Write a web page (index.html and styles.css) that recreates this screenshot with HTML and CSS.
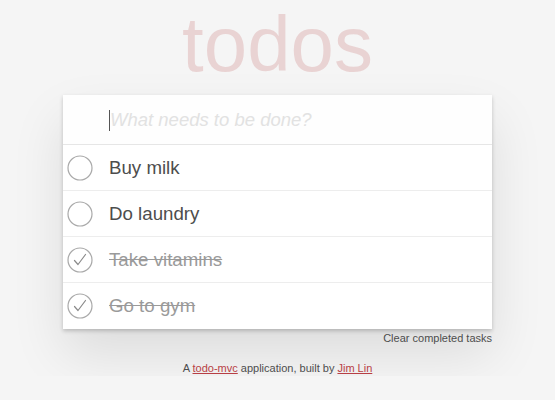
FILE: index.html
```html
<!DOCTYPE html>
<html>
<head>
<meta charset="utf-8">
<link rel="stylesheet" href="styles.css">
</head>
<body>
<div class="app">
  <h1 class="title">todos</h1>
  <section class="card">
    <div class="new-row">
      <span class="caret"></span>
      <input class="new-todo" placeholder="What needs to be done?">
    </div>
    <ul class="list">
      <li class="item">
        <svg class="toggle" width="26" height="26" viewBox="0 0 26 26"><circle cx="13" cy="13" r="12" fill="none" stroke="#a9a9a9" stroke-width="1.2"/></svg>
        <span class="label">Buy milk</span>
      </li>
      <li class="item">
        <svg class="toggle" width="26" height="26" viewBox="0 0 26 26"><circle cx="13" cy="13" r="12" fill="none" stroke="#a9a9a9" stroke-width="1.2"/></svg>
        <span class="label">Do laundry</span>
      </li>
      <li class="item done">
        <svg class="toggle" width="26" height="26" viewBox="0 0 26 26"><circle cx="13" cy="13" r="12" fill="none" stroke="#a9a9a9" stroke-width="1.2"/><path d="M7.5 13.5 L11 17.5 L18.5 7.5" fill="none" stroke="#8a8a8a" stroke-width="1.2" stroke-linecap="round" stroke-linejoin="round"/></svg>
        <span class="label">Take vitamins</span>
      </li>
      <li class="item done">
        <svg class="toggle" width="26" height="26" viewBox="0 0 26 26"><circle cx="13" cy="13" r="12" fill="none" stroke="#a9a9a9" stroke-width="1.2"/><path d="M7.5 13.5 L11 17.5 L18.5 7.5" fill="none" stroke="#8a8a8a" stroke-width="1.2" stroke-linecap="round" stroke-linejoin="round"/></svg>
        <span class="label">Go to gym</span>
      </li>
    </ul>
  </section>
  <div class="actions"><span class="clear">Clear completed tasks</span></div>
  <p class="info">A <a href="#">todo-mvc</a> application, built by <a href="#">Jim Lin</a></p>
</div>
</body>
</html>
```
FILE: styles.css
```css
html, body {
  margin: 0;
  padding: 0;
}
body {
  background: #f5f5f5;
  font-family: "Liberation Sans", Arial, sans-serif;
  color: #4d4d4d;
}
.app {
  width: 429px;
  margin: 0 auto;
  display: flex;
  flex-direction: column;
}
.title {
  margin: 0;
  padding-top: 5px;
  height: 78px;
  font-size: 78px;
  line-height: 78px;
  font-weight: normal;
  text-align: center;
  color: rgba(175, 47, 47, 0.17);
  margin-bottom: 12px;
}
.card {
  background: #fff;
  box-shadow: 0 2px 4px rgba(0, 0, 0, 0.2), 0 25px 50px rgba(0, 0, 0, 0.1);
}
.new-row {
  position: relative;
  height: 49px;
  border-bottom: 1px solid #e6e6e6;
  background: #fefefe;
  display: flex;
  align-items: center;
  padding-left: 47px;
}
.caret {
  position: absolute;
  left: 46px;
  top: 15px;
  width: 1px;
  height: 21px;
  background: #555;
}
.new-todo {
  border: 0;
  outline: none;
  background: transparent;
  font-family: inherit;
  font-size: 18.5px;
  padding: 0;
  width: 100%;
  color: #4d4d4d;
}
.new-todo::placeholder {
  font-style: italic;
  color: #e2e2e2;
}
.list {
  list-style: none;
  margin: 0;
  padding: 0;
}
.item {
  height: 45px;
  border-bottom: 1px solid #ededed;
  display: flex;
  align-items: center;
}
.item:last-child {
  border-bottom: 0;
  height: 46px;
}
.toggle {
  margin-left: 4px;
  margin-right: 16px;
  flex: none;
}
.label {
  font-size: 18.7px;
  color: #4d4d4d;
}
.done .label {
  color: #9a9a9a;
  text-decoration: line-through;
}
.actions {
  display: flex;
  justify-content: flex-end;
  padding-top: 2px;
}
.clear {
  font-size: 11px;
  line-height: 15px;
  color: #4d4d4d;
}
.info {
  margin: 15px 0 0;
  text-align: center;
  font-size: 11px;
  line-height: 15px;
  color: #4d4d4d;
}
.info a {
  color: #b83f45;
  text-decoration: underline;
}
```
